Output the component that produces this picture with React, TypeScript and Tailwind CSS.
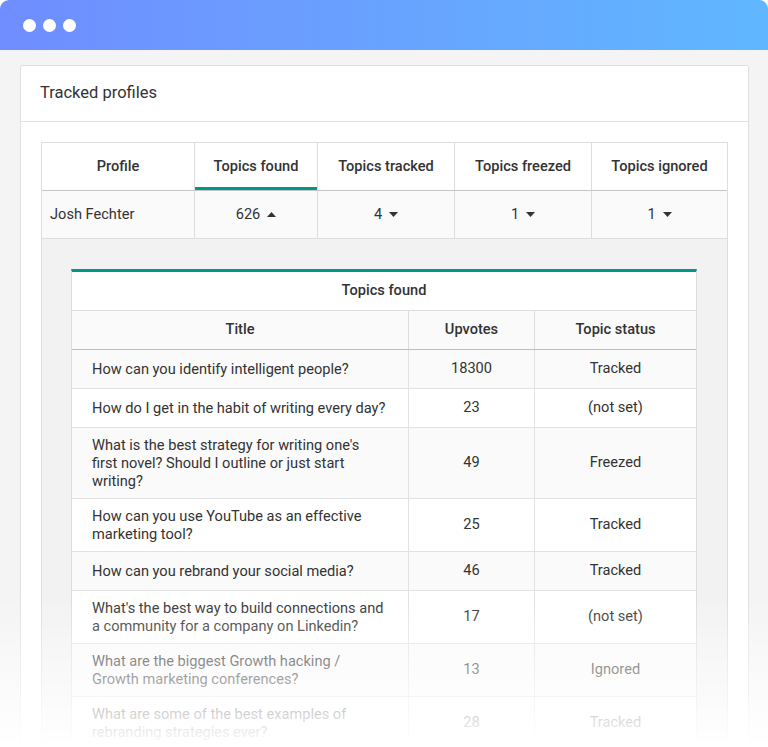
import React from 'react'

type Topic = { title: string; upvotes: number; status: string }

const TOPICS: Topic[] = [
  { title: 'How can you identify intelligent people?', upvotes: 18300, status: 'Tracked' },
  { title: 'How do I get in the habit of writing every day?', upvotes: 23, status: '(not set)' },
  {
    title: "What is the best strategy for writing one's first novel? Should I outline or just start writing?",
    upvotes: 49,
    status: 'Freezed',
  },
  { title: 'How can you use YouTube as an effective marketing tool?', upvotes: 25, status: 'Tracked' },
  { title: 'How can you rebrand your social media?', upvotes: 46, status: 'Tracked' },
  {
    title: "What's the best way to build connections and a community for a company on Linkedin?",
    upvotes: 17,
    status: '(not set)',
  },
  { title: 'What are the biggest Growth hacking / Growth marketing conferences?', upvotes: 13, status: 'Ignored' },
  { title: 'What are some of the best examples of rebranding strategies ever?', upvotes: 28, status: 'Tracked' },
]

const TABS = [
  { label: 'Topics found', value: '626', up: true },
  { label: 'Topics tracked', value: '4' },
  { label: 'Topics freezed', value: '1' },
  { label: 'Topics ignored', value: '1' },
]

function Caret({ up }: { up?: boolean }) {
  return (
    <svg width="9" height="5" viewBox="0 0 9 5" className="ml-[7px] fill-[#333]">
      {up ? <path d="M0 5 L4.5 0 L9 5 Z" /> : <path d="M0 0 L9 0 L4.5 5 Z" />}
    </svg>
  )
}

export default function App() {
  return (
    <div
      className="relative h-[747px] w-[768px] overflow-hidden bg-white text-[#333] text-[14.6px]"
      style={{ fontFamily: 'Roboto, "Liberation Sans", sans-serif' }}
    >
      {/* window bar */}
      <div className="h-[50px] rounded-t-[9px] bg-gradient-to-r from-[#6f8dff] to-[#5fb7ff] flex items-center gap-[7px] pl-[23px]">
        <span className="h-[13px] w-[13px] rounded-full bg-white" />
        <span className="h-[13px] w-[13px] rounded-full bg-white" />
        <span className="h-[13px] w-[13px] rounded-full bg-white" />
      </div>

      <div className="bg-[#f4f4f4] pt-[15px] pl-[20px] pr-[19px] h-[697px]">
        <div className="bg-white border border-[#e0e0e0] rounded-[2px]">
          <div className="h-[56px] border-b border-[#e0e0e0] flex items-center pl-[19px] text-[16.5px] text-[#333]">
            Tracked profiles
          </div>

          <div className="px-[20px] pt-[20px]">
            <div className="border border-[#dddddd]">
              {/* header row */}
              <div className="grid grid-cols-[152px_123px_137px_137px_1fr] border-b border-[#c6c6c6] font-medium">
                <div className="h-[47px] flex items-center justify-center">Profile</div>
                {TABS.map((t, i) => (
                  <div
                    key={t.label}
                    className={`h-[47px] flex items-center justify-center border-l border-[#dddddd] ${
                      i === 0 ? 'shadow-[inset_0_-3px_0_#00968a]' : ''
                    }`}
                  >
                    {t.label}
                  </div>
                ))}
              </div>
              {/* data row */}
              <div className="grid grid-cols-[152px_123px_137px_137px_1fr] border-b border-[#dddddd] bg-[#fafafa]">
                <div className="h-[47px] flex items-center pl-[8px]">Josh Fechter</div>
                {TABS.map((t) => (
                  <div key={t.label} className="h-[47px] flex items-center justify-center border-l border-[#dddddd]">
                    {t.value}
                    <Caret up={t.up} />
                  </div>
                ))}
              </div>

              {/* expanded */}
              <div className="bg-[#f2f2f2] pt-[30px] pl-[29px] pr-[30px] pb-[40px]">
                <div className="bg-white border-x border-b border-[#dddddd] border-t-[3px] border-t-[#00968a]">
                  <div className="h-[39px] flex items-center justify-center font-medium border-b border-[#dddddd]">
                    Topics found
                  </div>
                  <div className="grid grid-cols-[336px_126px_1fr] bg-[#fafafa] border-b border-[#bdbdbd] font-medium">
                    <div className="h-[38px] flex items-center justify-center">Title</div>
                    <div className="h-[38px] flex items-center justify-center border-l border-[#dddddd]">Upvotes</div>
                    <div className="h-[38px] flex items-center justify-center border-l border-[#dddddd]">Topic status</div>
                  </div>
                  {TOPICS.map((t, i) => (
                    <div
                      key={t.title}
                      className={`grid grid-cols-[336px_126px_1fr] border-b border-[#e2e2e2] ${
                        i % 2 === 0 ? 'bg-[#fafafa]' : 'bg-white'
                      }`}
                    >
                      <div className="min-h-[38px] py-[8px] pl-[20px] pr-[22px] flex items-center leading-[18px]">
                        {t.title}
                      </div>
                      <div className="min-h-[38px] flex items-center justify-center border-l border-[#e2e2e2]">
                        {t.upvotes}
                      </div>
                      <div className="min-h-[38px] flex items-center justify-center border-l border-[#e2e2e2]">
                        {t.status}
                      </div>
                    </div>
                  ))}
                </div>
              </div>
            </div>
          </div>
        </div>
      </div>

      {/* bottom fade */}
      <div className="pointer-events-none absolute bottom-0 left-0 right-0 h-[150px] bg-gradient-to-b from-white/0 to-white" />
    </div>
  )
}
